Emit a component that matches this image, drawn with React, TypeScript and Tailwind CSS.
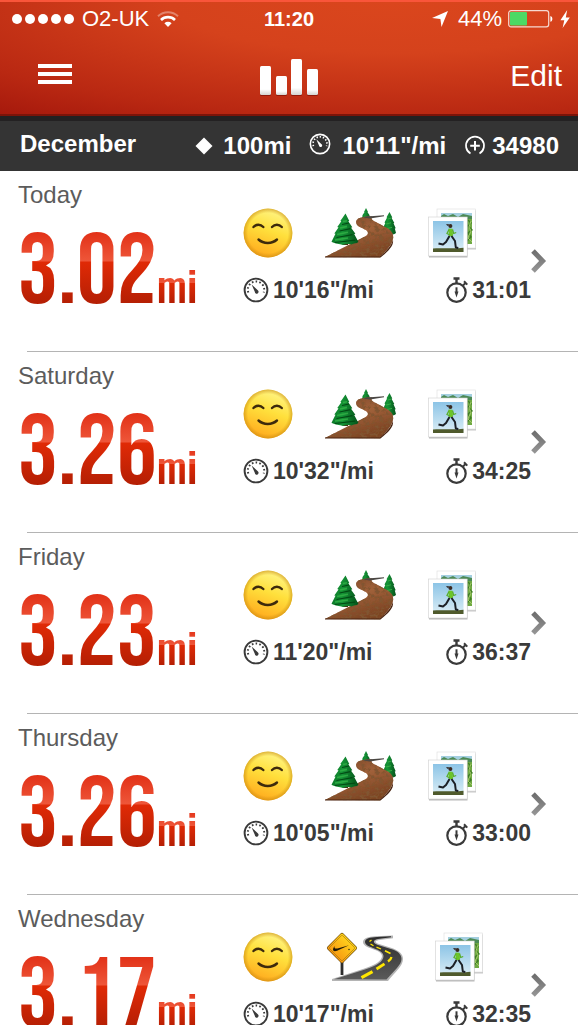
type Terrain = "trail" | "road";

type Run = {
  day: string;
  distance: string;
  pace: string;
  time: string;
  terrain: Terrain;
};

const runs: Run[] = [
  { day: "Today", distance: "3.02", pace: "10'16\"/mi", time: "31:01", terrain: "trail" },
  { day: "Saturday", distance: "3.26", pace: "10'32\"/mi", time: "34:25", terrain: "trail" },
  { day: "Friday", distance: "3.23", pace: "11'20\"/mi", time: "36:37", terrain: "trail" },
  { day: "Thursday", distance: "3.26", pace: "10'05\"/mi", time: "33:00", terrain: "trail" },
  { day: "Wednesday", distance: "3.17", pace: "10'17\"/mi", time: "32:35", terrain: "road" },
];

/* ======================================================
   SHARED GRADIENTS
====================================================== */

function Defs() {
  return (
    <svg className="absolute h-0 w-0" aria-hidden="true">
      <defs>
        <linearGradient id="face" x1="0.7" y1="0" x2="0.35" y2="1">
          <stop offset="0" stopColor="#fff68a" />
          <stop offset="0.45" stopColor="#ffe03c" />
          <stop offset="1" stopColor="#ffa81c" />
        </linearGradient>
        <radialGradient id="faceRim">
          <stop offset="0.82" stopColor="#c98a10" stopOpacity="0" />
          <stop offset="1" stopColor="#c98a10" stopOpacity="0.6" />
        </radialGradient>
        <linearGradient id="tree" x1="0" x2="1">
          <stop offset="0" stopColor="#0b7a28" />
          <stop offset="0.4" stopColor="#159336" />
          <stop offset="1" stopColor="#04521a" />
        </linearGradient>
        <linearGradient id="dirt" x1="0" y1="0" x2="0.5" y2="1">
          <stop offset="0" stopColor="#7a4528" />
          <stop offset="0.5" stopColor="#a0613a" />
          <stop offset="1" stopColor="#7d4424" />
        </linearGradient>
        {/* rough ground on the trail */}
        <filter id="ground" x="0" y="0" width="1" height="1">
          <feTurbulence type="fractalNoise" baseFrequency="0.22 0.34" numOctaves="3" seed="4" />
          <feColorMatrix values="0 0 0 0 0.22  0 0 0 0 0.09  0 0 0 0 0.03  4.5 0 0 0 -2" />
          <feComposite in2="SourceGraphic" operator="in" result="dark" />
          <feMerge>
            <feMergeNode in="SourceGraphic" />
            <feMergeNode in="dark" />
          </feMerge>
        </filter>
        <linearGradient id="asphalt" x1="0" y1="0" x2="0" y2="1">
          <stop offset="0" stopColor="#2c2c2c" />
          <stop offset="1" stopColor="#5a5a5a" />
        </linearGradient>
        <linearGradient id="sign" x1="0" y1="0" x2="0" y2="1">
          <stop offset="0" stopColor="#ffd21c" />
          <stop offset="1" stopColor="#f79a12" />
        </linearGradient>
        <linearGradient id="sky" x1="0" y1="0" x2="0" y2="1">
          <stop offset="0" stopColor="#8cc4e6" />
          <stop offset="1" stopColor="#dceef6" />
        </linearGradient>
        <linearGradient id="bar" x1="0" y1="0" x2="0" y2="1">
          <stop offset="0.8" stopColor="#ffffff" />
          <stop offset="1" stopColor="#d4d4d0" />
        </linearGradient>
        <linearGradient id="chevron" x1="0" y1="0" x2="0" y2="1">
          <stop offset="0" stopColor="#6e6e6e" />
          <stop offset="1" stopColor="#949494" />
        </linearGradient>
      </defs>
    </svg>
  );
}

/* ======================================================
   ICONS
====================================================== */

function Wifi() {
  return (
    <svg className="h-4 w-[22px]" viewBox="0 0 22 16" fill="none" stroke="#fff" strokeWidth="2.6">
      <path d="M1 5.2a14.5 14.5 0 0 1 20 0" strokeOpacity="0.35" strokeWidth="2" />
      <path d="M4 9a10 10 0 0 1 14 0" />
      <path d="M7.4 12.2a5.2 5.2 0 0 1 7.2 0L11 16Z" fill="#fff" stroke="none" />
    </svg>
  );
}

function Location() {
  return (
    <svg className="h-4 w-4" viewBox="0 0 16 16" fill="#fff">
      <path d="M16 0 9.500 16 8.400 8 0 7Z" />
    </svg>
  );
}

function Battery() {
  return (
    <svg className="h-[18px] w-[46px]" viewBox="0 0 46 18">
      <rect x="0.7" y="0.7" width="40" height="16.2" rx="2.4" fill="none" stroke="#fff" strokeOpacity="0.8" strokeWidth="1.2" />
      <rect x="2" y="2" width="17" height="13.6" rx="1" fill="#4cd964" />
      <path d="M42.4 6c2.6.6 2.6 5.2 0 5.8Z" fill="#fff" />
    </svg>
  );
}

function Bolt() {
  return (
    <svg className="h-[18px] w-[10px]" viewBox="0 0 10 18" fill="#fff">
      <path d="M7.2 0 .4 10.2H4.300L2.600 18 9.800 7.400H5.800Z" />
    </svg>
  );
}

function Logo() {
  return (
    <svg className="h-10 w-[60px]" viewBox="0 0 60 40">
      <g fill="#7d1208" opacity="0.7">
        <rect x="1" y="11" width="11" height="29" rx="1.5" />
        <rect x="17" y="21" width="11" height="19" rx="1.5" />
        <rect x="32" y="4" width="11" height="36" rx="1.5" />
        <rect x="48" y="14" width="11" height="26" rx="1.5" />
      </g>
      <g fill="url(#bar)">
        <rect x="1" y="10" width="11" height="29" rx="1.5" />
        <rect x="17" y="20" width="11" height="19" rx="1.5" />
        <rect x="32" y="3" width="11" height="36" rx="1.5" />
        <rect x="48" y="13" width="11" height="26" rx="1.5" />
      </g>
    </svg>
  );
}

function Gauge({ className }: { className: string }) {
  return (
    <svg className={className} viewBox="0 0 26 26" fill="none" stroke="currentColor">
      <circle cx="13" cy="13" r="11.4" strokeWidth="1.9" />
      <path d="M5.3 15.5a8.2 8.2 0 1 1 15.4 0" strokeWidth="2" strokeDasharray="1.6 2.2" />
      <path d="M8.600 7.500 14.800 13.200a1.900 1.900 0 1 1-3 1.600Z" fill="currentColor" stroke="none" />
    </svg>
  );
}

function Fuel() {
  return (
    <svg className="h-[22px] w-[22px]" viewBox="0 0 22 22" fill="none" stroke="#fff" strokeWidth="1.7">
      <path d="M6.500 18.500a9 9 0 1 1 9 0" />
      <path d="M11 6v9.600M6.200 10.800h9.600" strokeWidth="2" />
    </svg>
  );
}

function Stopwatch() {
  return (
    <svg className="h-[26px] w-[22px]" viewBox="0 0 22 26" fill="none" stroke="#3a3a3a">
      <circle cx="10.500" cy="15.600" r="9.200" strokeWidth="2.200" />
      <path d="M7.500 1.500h6M10.500 1.500v5" strokeWidth="2.400" />
      <path d="m17 8.500 2.600-2.600M18 4.300l3.300 3.300" strokeWidth="2" />
      <path d="M10.500 10.300v5" strokeWidth="2" />
      <path d="M8.500 14.600h4L10.500 20.500Z" fill="#3a3a3a" stroke="none" />
    </svg>
  );
}

function Smiley() {
  return (
    <svg className="h-[50px] w-[50px]" viewBox="0 0 50 50">
      <circle cx="25" cy="25" r="24.4" fill="url(#face)" />
      <circle cx="25" cy="25" r="24.4" fill="url(#faceRim)" />
      <g fill="none" stroke="#3d2a0c" strokeWidth="2.4" strokeLinecap="round">
        <path d="M10.500 19c2.800-3 7-3 9.800 0" />
        <path d="M29 19c2.800-3 7-3 9.800 0" />
        <path d="M15.500 31.500c5 4.600 13.500 4.600 18.500 0" />
      </g>
    </svg>
  );
}

function Trail() {
  return (
    <svg className="h-[50px] w-[71px]" viewBox="0 0 71 50">
      <path d="M41 0l2 4-.5.2 2.300 3.300-.6.2 1.800 3.300c-3 1-7 1-10 0l1.800-3.300-.6-.2L39.500 4.200 39 4Z" fill="url(#tree)" />
      <path
        d="M64.500 4l2.800 5.500-.8.300 2.800 5.200-.8.300 2.200 5-.9.200 1.200 4.500c-4 3-10 2.500-14 0l1.800-4.800-.8-.3 2.300-5-.8-.3 2.600-5.200-.6-.2Z"
        fill="url(#tree)"
      />
      <path d="M63 11l3-.8M61 16l5-1.200M60 21l7-1.600" stroke="#3fb84a" strokeWidth="1" opacity="0.8" />
      <path
        d="M0 49 38 29.500c5-2.500 6-4.500 4-6.500-2.500-2.500-11-4-11-9C31 11 35 9 42 8.500l5-.2c-1.500 2.200 0 4.200 3 5.200l11 6c5.500 2.500 8 6.500 7 11.500C66.500 38 60 44 55 49.200Z"
        fill="url(#dirt)"
        filter="url(#ground)"
      />
      <path d="M42 8.500 59 7.200v1L45 10.400 38 9.600Z" fill="#4a4743" />
      <path d="M0 48.400h55c6-5 11-10 13-16.500 1 6-5 11.500-12.500 17.600H0Z" fill="#4a2411" />
      <path d="M18 33h5v4h-5z" fill="#4b2a14" />
      <path
        d="M20.500 5.500l3.800 7.500-1 .3 4 6-1.200.4 4.300 6-1.200.4L33.500 34c-2 1.600-5 1.200-7 2.500-3-.8-6-.2-9 .5-3-1.500-7-.8-11-3.200l4-8-1.200-.4 4.200-6-1.200-.4 4-5.800-1-.3Z"
        fill="url(#tree)"
      />
      <path d="M18 13.500l4-.8M15 20l7-1.600M12 26.500l11-2.200M10 32l13-2" stroke="#36b548" strokeWidth="1.600" opacity="0.75" />
      <path d="M17 16.500l7-1.500M14.500 23l11-2.400M11.500 29.500l16-2.800M10 34.500l20-2.400" stroke="#034a14" strokeWidth="1.200" />
    </svg>
  );
}

function Road() {
  return (
    <svg className="h-[50px] w-[78px]" viewBox="0 0 78 50">
      <path
        d="M7 47 38 37c12-4 19-8 19-13C57 17 38 17 38 10 38 6 44 4.500 50 4.200L68 3.600v2.600L54 8c-5 1-4 2.500 0 4l12 3.800C74 18.500 78 22 78 27c0 7-8 13-15 22H7Z"
        fill="#b4b4b4"
      />
      <path
        d="M9 47.300 40 37.500c12-4 18.500-8 18.500-13.500C58.500 16.500 40 16 40 10c0-3.700 5-4.700 12-5.100l14-.7v1L53 6.900c-6 1-5 4.500 0 6l13 4c7 2 10.500 5.500 10.500 10 0 6-7 11-15 20.500Z"
        fill="url(#asphalt)"
      />
      <g stroke="#ffe600" fill="none" strokeWidth="2.2">
        <path d="M36.500 45.600 47.500 39.600" strokeWidth="3.2" />
        <path d="M51.500 37 59.500 31.800" strokeWidth="2.800" />
        <path d="M63 29.500c2-1.500 3.300-3 3.500-4.500" />
        <path d="M65.500 21.500 60 18.800" strokeWidth="1.800" />
        <path d="M56 17l-4.500-1.800M48.500 13.800 45.500 12M44.500 9.500l2-1.500" strokeWidth="1.300" />
      </g>
      <path d="M17 30v13" stroke="#2d2d2d" strokeWidth="2.800" />
      <rect x="5.800" y="4.800" width="22.4" height="22.4" rx="2" transform="rotate(45 17 16)" fill="#6b4a08" />
      <rect x="6.400" y="5.400" width="21.2" height="21.2" rx="1.500" transform="rotate(45 17 16)" fill="url(#sign)" />
      <rect x="7.800" y="6.800" width="18.4" height="18.4" rx="1" transform="rotate(45 17 16)" fill="none" stroke="#8a640c" strokeWidth="0.500" />
      <path d="M9.800 14c-3 3.600-2 6.200 2.200 4.800L24 13.200 12.500 16.400c-3 .8-3.500-.7-2.700-2.400Z" fill="#1d1808" />
      <circle cx="24" cy="17.500" r="0.700" fill="#1d1808" />
    </svg>
  );
}

function Photos() {
  return (
    <svg className="h-[50px] w-12" viewBox="0 0 48 50">
      <rect x="9.500" y="2.500" width="38.500" height="39" fill="#000" opacity="0.22" />
      <rect x="9" y="1" width="38.500" height="39" fill="#fff" stroke="#dcdcdc" strokeWidth="0.6" />
      <rect x="13" y="5" width="31" height="31" fill="#6fa843" />
      <path d="M13 5h31v4H13Z" fill="#a4cfe0" />
      <path d="M13 8l3-2 4 2 5-2 5 3 5-3 9 2v3H13Z" fill="#4c8a55" />
      <path d="M40 12l3 3-3 3 4 4-4 3 3 4-4 4" stroke="#3f7d26" strokeWidth="1.4" fill="none" />
      <path d="M43 13l-2 6 2 4-3 7 4 4" stroke="#a8cf6a" strokeWidth="0.9" fill="none" />
      <rect x="1" y="10.500" width="38.500" height="39" fill="#000" opacity="0.28" />
      <rect x="0.600" y="9" width="38.600" height="39" fill="#fff" stroke="#d0d0d0" strokeWidth="0.6" />
      <rect x="5" y="13" width="30.500" height="31" fill="url(#sky)" />
      <path d="M5 40.500c8-1 20 .6 30.500-.7V44H5Z" fill="#4f5a2c" />
      <circle cx="22.400" cy="18" r="2" fill="#3b2a22" />
      <path d="M20.800 16l-3 .6 2.600 1.600Z" fill="#2c1e1a" />
      <path d="M20.500 20.500l4 .3.600 7-4.200.6Z" fill="#6cc527" />
      <path d="M21 21.500l-2 4 3 1.500M24.500 21.500l1.200 4 2.500-1" fill="none" stroke="#58ad2a" strokeWidth="1.3" />
      <path
        d="M21.500 28l-3.500 6-3 2.500-4.500-1M23.500 28l3.500 5 .8 6.500 2.500.4"
        fill="none"
        stroke="#1c2026"
        strokeWidth="2"
        strokeLinejoin="round"
      />
    </svg>
  );
}

function Chevron() {
  return (
    <svg className="h-6 w-4" viewBox="0 0 16 24" fill="none" stroke="url(#chevron)" strokeWidth="5">
      <path d="M2 2 11.600 12 2 22" />
    </svg>
  );
}

/* ======================================================
   HEADER
====================================================== */

function Header() {
  return (
    <header className="border-t-2 border-b-2 border-t-[#f9553a] border-b-[#7c1409] bg-[radial-gradient(ellipse_110%_130%_at_68%_0%,#da461d_0%,#d5421c_35%,#b92812_78%,#a5180c_100%)] text-white">
      {/* STATUS BAR */}
      <div className="grid grid-cols-[1fr_auto_1fr] items-center px-2 pt-[3px] text-[22px] leading-7">
        <div className="flex items-center gap-2 pl-1">
          <div className="flex gap-[3px]">
            {[0, 1, 2, 3, 4].map((n) => (
              <span key={n} className="size-[10px] rounded-full bg-white" />
            ))}
          </div>
          <span>O2-UK</span>
          <Wifi />
        </div>
        <span className="text-[20px] font-bold">11:20</span>
        <div className="flex items-center justify-end gap-[6px]">
          <Location />
          <span className="pl-1">44%</span>
          <Battery />
          <Bolt />
        </div>
      </div>

      {/* NAV BAR */}
      <div className="grid h-[81px] grid-cols-[1fr_auto_1fr] items-center px-4 pt-1">
        <button type="button" aria-label="Menu" className="ml-[22px] flex w-[34px] flex-col gap-1 pb-1">
          <span className="h-1 w-full bg-white" />
          <span className="h-1 w-full bg-white" />
          <span className="h-1 w-full bg-white" />
        </button>
        <Logo />
        <button type="button" className="justify-self-end text-[30px] leading-9">
          Edit
        </button>
      </div>
    </header>
  );
}

function Summary() {
  return (
    <section className="flex items-center justify-between border-t-[5px] border-t-[#232122] bg-[#343434] pr-[19px] pl-5 text-[24px] leading-[50px] font-bold text-white">
      <h2 className="pb-1 leading-[46px]">December</h2>
      <div className="flex items-center gap-[18px]">
        <div className="flex items-center gap-[11px]">
          <span className="flex size-[17px] items-center justify-center">
            <span className="size-3 rotate-45 bg-white" />
          </span>
          <span>100mi</span>
        </div>
        <div className="flex items-center gap-[11px]">
          <span className="pb-1">
            <Gauge className="size-[22px]" />
          </span>
          <span>10'11"/mi</span>
        </div>
        <div className="flex items-center gap-[6px]">
          <Fuel />
          <span>34980</span>
        </div>
      </div>
    </section>
  );
}

/* ======================================================
   RUN ROW
====================================================== */

function RunRow({ run }: { run: Run }) {
  return (
    <li>
      <a href="#" className="flex h-[180px] pr-[31px] pl-[18px]">
        <div className="flex-1 pt-[10px]">
          <h3 className="text-[24px] leading-7 text-[#5c5c5c]">{run.day}</h3>
          <p className="mt-[14px] flex items-baseline font-['Bebas_Neue','Oswald','Roboto_Condensed',sans-serif] text-[100px] leading-[100px]">
            <span className="inline-block bg-[linear-gradient(#e23218_10%,#ee5639_38%,#e02a06_39%,#b51f04_80%)] bg-clip-text text-transparent">
              {run.distance}
            </span>
            <span className="inline-block bg-[linear-gradient(#e23218_10%,#ee5639_47%,#e02a06_48%,#b51f04_95%)] bg-clip-text font-['Oswald','Roboto_Condensed',sans-serif] text-[42px] leading-[42px] font-medium text-transparent">
              mi
            </span>
          </p>
        </div>

        <div className="w-[288px] pt-[37px]">
          <div className="flex items-center gap-8">
            <Smiley />
            {run.terrain === "trail" ? <Trail /> : <Road />}
            <Photos />
          </div>
          <div className="mt-[18px] flex justify-between text-[23px] leading-7 font-bold text-[#3a3a3a]">
            <span className="flex items-center gap-1">
              <Gauge className="size-[26px]" />
              {run.pace}
            </span>
            <span className="flex items-center gap-1">
              <Stopwatch />
              {run.time}
            </span>
          </div>
        </div>

        <div className="flex items-center">
          <Chevron />
        </div>
      </a>
      <div className="ml-[27px] h-px bg-[#b4b4b4]" />
    </li>
  );
}

export default function App() {
  return (
    <main className="h-screen overflow-hidden bg-white font-['Liberation_Sans',Arial,sans-serif]">
      <Defs />
      <Header />
      <Summary />
      <ul>
        {runs.map((run) => (
          <RunRow key={run.day} run={run} />
        ))}
      </ul>
    </main>
  );
}
